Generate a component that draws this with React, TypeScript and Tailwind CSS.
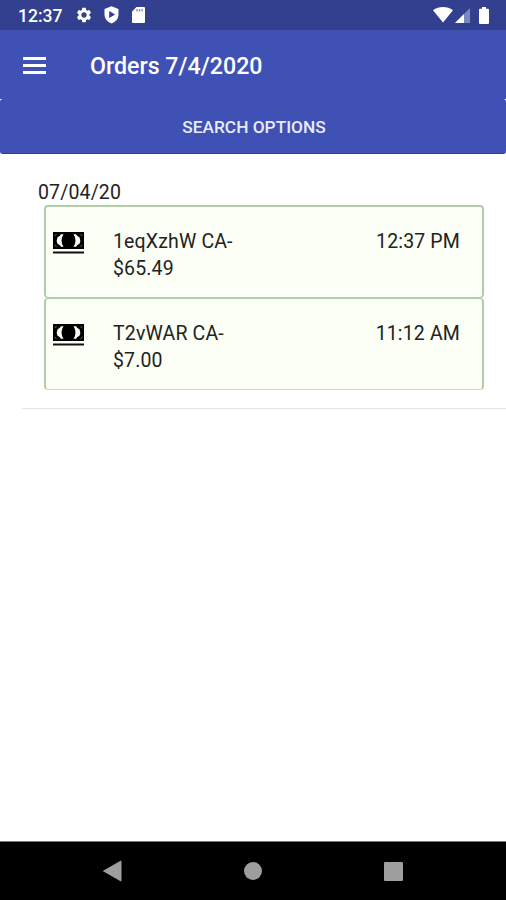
import { MdSettings } from 'react-icons/md';

type Order = {
  id: string;
  code: string;
  total: string;
  time: string;
};

const orders: Order[] = [
  { id: '1eqXzhW', code: 'CA-', total: '$65.49', time: '12:37 PM' },
  { id: 'T2vWAR', code: 'CA-', total: '$7.00', time: '11:12 AM' },
];

const CashIcon = () => (
  <svg width="31" height="22" viewBox="0 0 31 22" className="block">
    <rect width="31" height="17" fill="#000" />
    <path d="M10.5 2.2H8Q7 4.300 4.500 5.200Q3 8.500 4.500 11.800Q7 12.700 8 14.800H10.500Q8.500 12 8.500 8.500Q8.500 5 10.500 2.200Z" fill="#fbfff5" />
    <path d="M20.500 2.200H23Q24 4.300 26.500 5.200Q28 8.500 26.500 11.800Q24 12.700 23 14.800H20.500Q22.500 12 22.500 8.500Q22.500 5 20.500 2.200Z" fill="#fbfff5" />
    <path d="M1.500 4Q3 4 3.300 1.800M29.500 4Q28 4 27.700 1.800M1.500 13Q3 13 3.300 15.200M29.500 13Q28 13 27.700 15.200" fill="none" stroke="#999" strokeWidth="0.6" />
    <rect y="19.500" width="31" height="2" fill="#111" />
  </svg>
);

const StatusBar = () => (
  <div className="flex h-[30px] items-center justify-between bg-[#33408f] pl-[18px] pr-[17px] text-white">
    <div className="flex items-center">
      <span className="w-[57px] pt-[2px] text-[17.5px] font-medium leading-[30px]">12:37</span>
      <MdSettings className="h-[18px] w-[18px]" />
      <svg width="15" height="18" viewBox="0 0 15 18" className="ml-[11px]">
        <path d="M7.5 0.3L14.5 3v5.5c0 4-2.8 7.5-7 9-4.200-1.500-7-5-7-9V3z" fill="#fff" />
        <path d="M5.200 5v7l6-3.500z" fill="#33408f" />
      </svg>
      <svg width="13" height="16" viewBox="0 0 13 16" className="ml-[13px]">
        <path d="M4.500 0H12q1 0 1 1v14q0 1-1 1H1q-1 0-1-1V4.500z" fill="#fff" />
        <path d="M5 2v2.500M7.500 2v2.500M10 2v2.500" stroke="#7d86bd" strokeWidth="1.300" />
      </svg>
    </div>
    <div className="flex items-center">
      <svg width="20" height="16" viewBox="0 0 20 16">
        <path d="M0 3.200C5.800-1 14.200-1 20 3.200L10 15.500z" fill="#fff" />
      </svg>
      <svg width="15" height="15" viewBox="0 0 15 15" className="ml-[2px]">
        <path d="M15 0V15H0z" fill="#7c86bf" />
        <path d="M9 6V15H0z" fill="#fff" />
      </svg>
      <svg width="10" height="17" viewBox="0 0 10 17" className="ml-[9px]">
        <path d="M3 0h4v1.700h2q1 0 1 1V16q0 1-1 1H1q-1 0-1-1V2.700q0-1 1-1h2z" fill="#fff" />
      </svg>
    </div>
  </div>
);

const Toolbar = () => (
  <header className="flex h-[69px] items-center bg-[#3f51b5] pl-[23px] text-white">
    <button aria-label="Menu" className="mt-[1px] flex w-[23px] flex-col gap-[4px]">
      <span className="h-[3px] w-full bg-white" />
      <span className="h-[3px] w-full bg-white" />
      <span className="h-[3px] w-full bg-white" />
    </button>
    <h1 className="ml-[44px] mt-[3px] text-[23.2px] font-medium leading-[30px]">Orders 7/4/2020</h1>
  </header>
);

const OrderCard = ({ order }: { order: Order }) => (
  <div className="flex h-[92px] items-start rounded-[4px] border-x-2 border-y border-[#b0cca9] bg-[#fbfff5] pl-[7px] pr-[22px] pt-[21px] first:h-[93px] first:border-t-2 last:border-b-[#ccdcc4]">
    <div className="mt-[4px] w-[60px]">
      <CashIcon />
    </div>
    <div className="flex-1 leading-[27px]">
      <p>{order.id} {order.code}</p>
      <p>{order.total}</p>
    </div>
    <time className="leading-[27px]">{order.time}</time>
  </div>
);

const NavigationBar = () => (
  <nav className="flex h-[59px] items-center border-t border-[#777] bg-black pl-[103px]">
    <svg width="19" height="22" viewBox="0 0 19 22">
      <path d="M0.500 11L18 1v20z" fill="#9e9e9e" stroke="#9e9e9e" strokeLinejoin="round" />
    </svg>
    <div className="ml-[122px] h-[18px] w-[18px] rounded-full bg-[#9e9e9e]" />
    <div className="ml-[122px] h-[19px] w-[19px] rounded-[1px] bg-[#9e9e9e]" />
  </nav>
);

const App = () => {
  return (
    <div className="flex h-[900px] w-[506px] flex-col overflow-hidden bg-white font-['Roboto',sans-serif]">
      <StatusBar />
      <Toolbar />
      <button className="h-[55px] w-full rounded-[3px] border-b border-[#303f9f] bg-[#3f51b5] pl-[2px] pt-[3px] text-[17.3px] font-medium text-[#e8ebfa]">
        SEARCH OPTIONS
      </button>

      <main className="flex-1 text-[19.5px] tracking-[0.15px] text-[#222]">
        <section className="ml-[22px] h-[255px] border-b border-[#e4e4e4] pl-[16px] pr-[22px] pt-[25px]">
          <h2 className="h-[26px] leading-[28px]">07/04/20</h2>
          <div className="ml-[6px]">
            {orders.map((order) => (
              <OrderCard key={order.id} order={order} />
            ))}
          </div>
        </section>
      </main>

      <NavigationBar />
    </div>
  );
};

export default App;
